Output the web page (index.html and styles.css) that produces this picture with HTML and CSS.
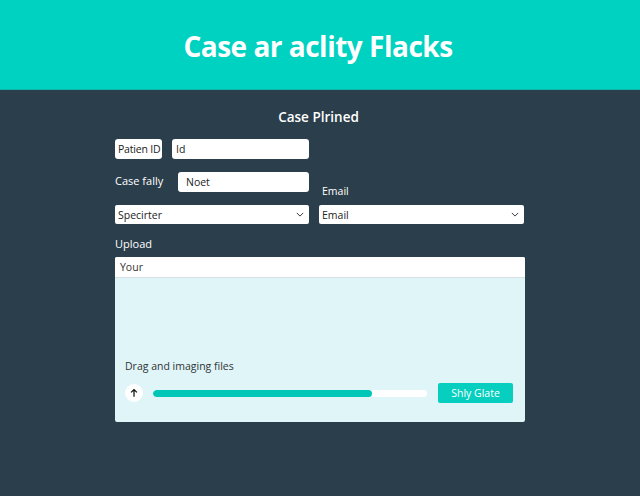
FILE: index.html
```html
<!DOCTYPE html>
<html>
<head>
<meta charset="utf-8">
<link rel="stylesheet" href="styles.css">
</head>
<body>
<header class="hero"><h1>Case ar aclity Flacks</h1></header>
<main class="main">
  <h2 class="section-title">Case Plrined</h2>
  <div class="form-grid">
    <div class="row">
      <span class="tag">Patien ID</span>
      <div class="field field-id">Id</div>
    </div>
    <div class="spacer"></div>
    <div class="row">
      <span class="plain-label">Case fally</span>
      <div class="field field-noet">Noet</div>
    </div>
    <div class="email-label">Email</div>
    <div class="select">Specirter<svg class="chev" viewBox="0 0 10 6"><path d="M1 1l4 4 4-4" fill="none" stroke="#333" stroke-width="1.2"/></svg></div>
    <div class="select">Email<svg class="chev" viewBox="0 0 10 6"><path d="M1 1l4 4 4-4" fill="none" stroke="#333" stroke-width="1.2"/></svg></div>
  </div>
  <div class="upload-label">Upload</div>
  <section class="upload">
    <div class="upload-top">Your</div>
    <div class="upload-body">
      <p class="drop-text">Drag and imaging files</p>
      <div class="progress-row">
        <span class="arrow-circle"><svg viewBox="0 0 12 12"><path d="M6 10.5V2M2.5 5.2L6 1.8l3.5 3.4" fill="none" stroke="#111" stroke-width="1.5"/></svg></span>
        <div class="track"><div class="fill" style="width:80%"></div></div>
        <button class="btn">Shly Glate</button>
      </div>
    </div>
  </section>
</main>
</body>
</html>
```
FILE: styles.css
```css
* { box-sizing: border-box; }
html, body { margin: 0; padding: 0; }
body {
  background: #2b3e4b;
  font-family: "Open Sans", "Noto Sans", sans-serif;
  width: 640px;
  height: 496px;
  overflow: hidden;
}
.hero {
  height: 90px;
  background: #00d2c1;
  display: flex;
  align-items: center;
  justify-content: center;
  border-bottom: 1px solid #0fb5a8;
}
.hero h1 {
  margin: 0;
  color: #fff;
  font-size: 28px;
  font-weight: 700;
  letter-spacing: -0.5px;
  padding-top: 2px;
  padding-right: 4px;
}
.main {
  width: 410px;
  margin: 0 auto;
  padding-top: 17px;
}
.section-title {
  margin: 0 0 12px;
  text-align: center;
  color: #fff;
  font-size: 13.5px;
  font-weight: 600;
  line-height: 20px;
  padding-right: 3px;
}
.form-grid {
  display: grid;
  grid-template-columns: 194px 205px;
  grid-template-rows: 20px 20px 19px;
  column-gap: 10px;
  row-gap: 13px;
}
.row { display: flex; align-items: center; height: 20px; }
.tag {
  background: #fff;
  border-radius: 3px;
  height: 20px;
  padding: 0 3px;
  font-size: 10.5px;
  color: #222;
  display: flex;
  align-items: center;
  width: 47px;
  white-space: nowrap;
  letter-spacing: -0.2px;
}
.field {
  background: #fff;
  border-radius: 3px;
  height: 20px;
  font-size: 10.5px;
  color: #222;
  display: flex;
  align-items: center;
  padding-left: 4px;
}
.field-id { margin-left: 10px; flex: 1; }
.plain-label { color: #fff; font-size: 11px; width: 63px; padding-bottom: 3px; }
.field-noet { flex: 1; padding-left: 8px; }
.email-label {
  color: #fff;
  font-size: 10.5px;
  align-self: end;
  padding-left: 3px;
  line-height: 14px;
  margin-bottom: -6px;
}
.select {
  background: #fff;
  border-radius: 2px;
  height: 19px;
  font-size: 10.5px;
  color: #222;
  display: flex;
  align-items: center;
  justify-content: space-between;
  padding: 0 5px 0 3px;
}
.chev { width: 8px; height: 5px; }
.upload-label {
  color: #fff;
  font-size: 11px;
  margin-top: 12px;
  line-height: 16px;
}
.upload {
  margin-top: 5px;
  border-radius: 2px;
  overflow: hidden;
  background: #dff5f8;
  height: 165px;
  display: flex;
  flex-direction: column;
}
.upload-top {
  background: #fff;
  height: 21px;
  border-bottom: 1px solid #d6dfe2;
  font-size: 10.5px;
  color: #333;
  display: flex;
  align-items: center;
  padding-left: 5px;
}
.upload-body {
  flex: 1;
  display: flex;
  flex-direction: column;
  justify-content: flex-end;
  padding: 0 11px 19px 10px;
}
.drop-text {
  margin: 0 0 10px;
  font-size: 10.5px;
  color: #333;
}
.progress-row { display: flex; align-items: center; height: 20px; }
.arrow-circle {
  width: 18px; height: 18px;
  border-radius: 50%;
  background: #fff;
  display: flex; align-items: center; justify-content: center;
}
.arrow-circle svg { width: 10px; height: 10px; }
.track {
  margin-left: 10px;
  width: 274px;
  height: 7px;
  background: #fff;
  border-radius: 4px;
  overflow: hidden;
}
.fill { height: 100%; background: #00c6b7; border-radius: 4px; }
.btn {
  margin-left: 11px;
  width: 75px;
  height: 20px;
  border: none;
  border-radius: 2px;
  background: #06cfbf;
  color: #fff;
  font-family: inherit;
  font-size: 10.5px;
  padding: 0;
}
```
